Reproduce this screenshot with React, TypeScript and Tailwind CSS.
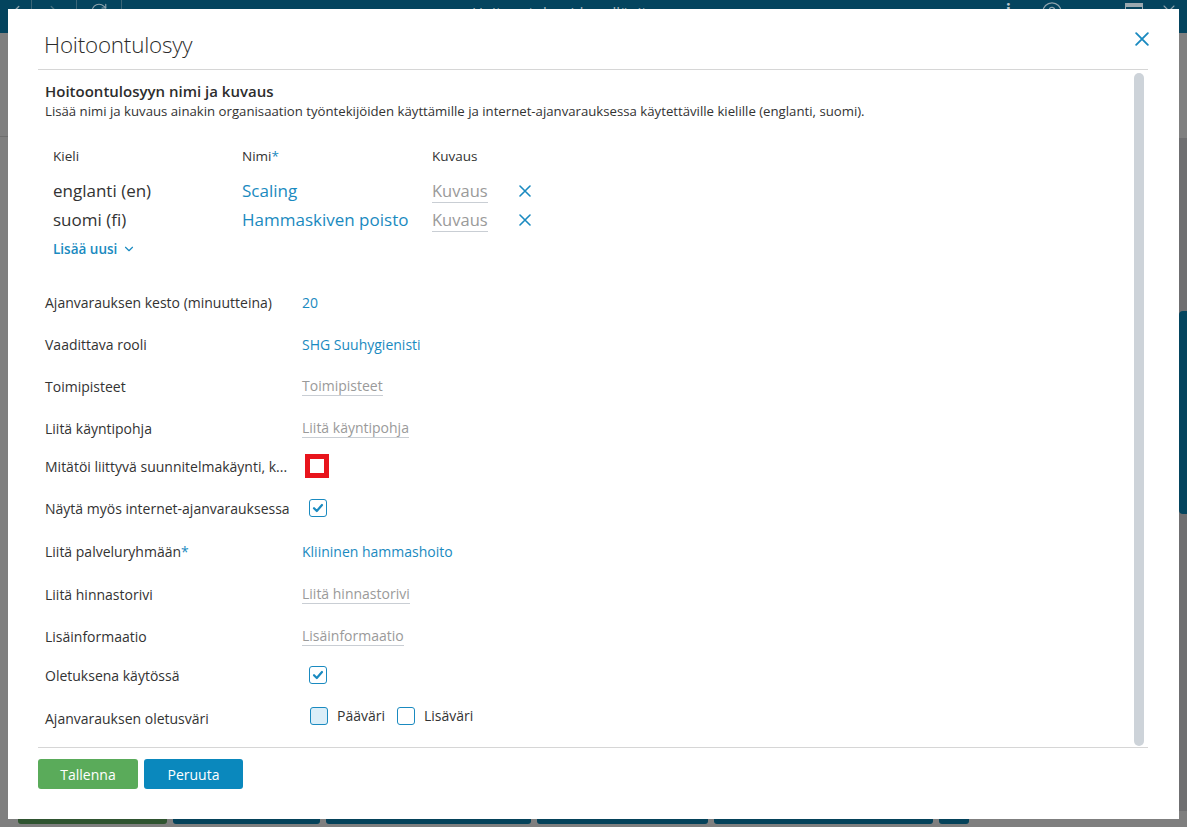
import { ChevronDown, ChevronLeft, ChevronRight, RotateCw, HelpCircle, X } from "lucide-react";

const font = { fontFamily: '"Open Sans", "Noto Sans", sans-serif' };

type Row = {
  label: string;
  required?: boolean;
  kind: "value" | "placeholder" | "checked" | "focused" | "colors";
  text?: string;
  spacing: string;
};

const rows: Row[] = [
  { label: "Ajanvarauksen kesto (minuutteina)", kind: "value", text: "20", spacing: "mt-0" },
  { label: "Vaadittava rooli", kind: "value", text: "SHG Suuhygienisti", spacing: "mt-[18px]" },
  { label: "Toimipisteet", kind: "placeholder", text: "Toimipisteet", spacing: "mt-[18px]" },
  { label: "Liitä käyntipohja", kind: "placeholder", text: "Liitä käyntipohja", spacing: "mt-[18px]" },
  { label: "Mitätöi liittyvä suunnitelmakäynti, k...", kind: "focused", spacing: "mt-[14px]" },
  { label: "Näytä myös internet-ajanvarauksessa", kind: "checked", spacing: "mt-[18px]" },
  { label: "Liitä palveluryhmään", required: true, kind: "value", text: "Kliininen hammashoito", spacing: "mt-[19px]" },
  { label: "Liitä hinnastorivi", kind: "placeholder", text: "Liitä hinnastorivi", spacing: "mt-[19px]" },
  { label: "Lisäinformaatio", kind: "placeholder", text: "Lisäinformaatio", spacing: "mt-[18px]" },
  { label: "Oletuksena käytössä", kind: "checked", spacing: "mt-[15px]" },
  { label: "Ajanvarauksen oletusväri", kind: "colors", spacing: "mt-[19px]" },
];

const Check = () => (
  <span className="flex h-[18px] w-[18px] items-center justify-center rounded-[3px] border-[1.5px] border-[#1a8ac0] bg-white">
    <svg viewBox="0 0 12 12" className="h-[12px] w-[12px]">
      <path d="M2 6.2 L4.8 9 L10 3" fill="none" stroke="#1a8ac0" strokeWidth="2.2" strokeLinecap="round" strokeLinejoin="round" />
    </svg>
  </span>
);

const Placeholder = ({ text }: { text: string }) => (
  <span className="border-b border-[#c9ced4] leading-[19px] text-[#9a9a9a]">{text}</span>
);

const Cross = ({ size }: { size: string }) => (
  <svg viewBox="0 0 12 12" className={size}>
    <path d="M1 1 L11 11 M11 1 L1 11" stroke="#1a8ac0" strokeWidth="1.6" strokeLinecap="round" />
  </svg>
);

function FieldValue({ row }: { row: Row }) {
  switch (row.kind) {
    case "value":
      return <span className="text-[#1a8ac0]">{row.text}</span>;
    case "placeholder":
      return <Placeholder text={row.text ?? ""} />;
    case "checked":
      return (
        <span className="ml-[7px]">
          <Check />
        </span>
      );
    case "focused":
      return (
        <span className="ml-[3px] flex h-[24px] w-[24px] items-center justify-center border-[5px] border-[#e8141c] bg-white" />
      );
    case "colors":
      return (
        <span className="ml-[8px] -mt-[5px] flex items-center">
          <span className="h-[18px] w-[18px] rounded-[3px] border-[1.5px] border-[#1a8ac0] bg-[#dbeef8]" />
          <span className="ml-[9px]">Pääväri</span>
          <span className="ml-[12px] h-[18px] w-[18px] rounded-[3px] border-[1.5px] border-[#1a8ac0] bg-white" />
          <span className="ml-[9px]">Lisäväri</span>
        </span>
      );
  }
}

function AppBackdrop() {
  return (
    <div className="flex h-full flex-col">
      <div className="relative flex h-[33px] items-start bg-[#04445e] text-[#8fa3ad]">
        <div className="flex h-[33px] w-[32px] items-start justify-center border-r border-[#3b6678] pt-[1px]">
          <ChevronLeft size={22} strokeWidth={1.5} />
        </div>
        <div className="flex h-[33px] w-[45px] items-start justify-center border-r border-[#3b6678] pt-[1px] text-[#46707f]">
          <ChevronRight size={22} strokeWidth={1.5} />
        </div>
        <div className="flex h-[33px] w-[45px] items-start justify-center border-r border-[#3b6678] pt-[2px]">
          <RotateCw size={18} strokeWidth={1.5} />
        </div>
        <div className="flex-1 pt-[1px] text-center text-[15px] text-[#aab8bf]">Hoitoontulosyiden ylläpito</div>
        <div className="flex items-start pr-[8px] pt-[1px]">
          <span className="text-[17px] font-bold leading-[20px] text-[#b9c5cb]">i</span>
          <span className="ml-[30px]">
            <HelpCircle size={22} strokeWidth={1.3} />
          </span>
          <span className="mt-[2px] ml-[62px] h-[16px] w-[18px] border-t-[4px] border-x border-b border-[#9aa9b0]" />
          <span className="ml-[16px]">
            <X size={20} strokeWidth={1.3} />
          </span>
        </div>
      </div>
      <div className="flex flex-1">
        <div className="flex-1 bg-[#7f7f7f]">
          <div className="h-[104px] border-b border-[#6e6e6e]" />
        </div>
        <div className="flex w-[8px] flex-col">
          <div className="h-[105px] bg-[#808080]" />
          <div className="flex flex-1 flex-col bg-[#6f6f71] pt-[173px]">
            <div className="h-[203px] rounded-l-[4px] bg-[#04455e]" />
          </div>
        </div>
      </div>
      <div className="flex h-[16px] items-end gap-[6px] bg-[#7f7f7f] pb-[3px] pl-[18px]">
        <div className="h-[10px] w-[149px] rounded-b-[3px] bg-[#2f5430]" />
        <div className="h-[10px] w-[147px] rounded-b-[3px] bg-[#04425a]" />
        <div className="h-[10px] w-[205px] rounded-b-[3px] bg-[#04425a]" />
        <div className="h-[10px] w-[171px] rounded-b-[3px] bg-[#04425a]" />
        <div className="h-[10px] w-[219px] rounded-b-[3px] bg-[#04425a]" />
        <div className="h-[10px] w-[30px] rounded-b-[3px] bg-[#04425a]" />
      </div>
    </div>
  );
}

export default function App() {
  return (
    <div className="relative h-[827px] w-[1187px] overflow-hidden bg-[#7f7f7f]" style={font}>
      <AppBackdrop />

      <div className="absolute left-[8px] top-[9px] flex h-[810px] w-[1171px] flex-col bg-white text-[#333]">
        <div className="flex h-[60px] items-center justify-between pl-[36px] pr-[30px]">
          <h1 className="pt-[11px] text-[22.4px] font-light tracking-[-0.2px] text-[#2b2b2b]">Hoitoontulosyy</h1>
          <Cross size="h-[14px] w-[14px]" />
        </div>

        <div className="flex min-h-0 flex-1 border-t border-[#d6d6d6] ml-[30px] mr-[31px]">
          <div className="flex-1 pl-[7px] pt-[10px]">
            <h2 className="text-[15px] font-semibold leading-[22px] text-[#2d2d2d]">Hoitoontulosyyn nimi ja kuvaus</h2>
            <p className="text-[13.2px] leading-[18px] text-[#333]">
              Lisää nimi ja kuvaus ainakin organisaation työntekijöiden käyttämille ja internet-ajanvarauksessa käytettäville kielille (englanti, suomi).
            </p>

            <div className="mt-[26px] pl-[8px] text-[13.5px]">
              <div className="grid grid-cols-[189px_190px_87px_20px] leading-[20px]">
                <span>Kieli</span>
                <span>
                  Nimi<span className="text-[#1a8ac0]">*</span>
                </span>
                <span>Kuvaus</span>
                <span />
              </div>
              <div className="mt-[14px] grid grid-cols-[189px_190px_87px_20px] items-center gap-y-[7px] text-[17px] leading-[22px]">
                <span>englanti (en)</span>
                <span className="text-[#1a8ac0]">Scaling</span>
                <span className="justify-self-start text-[16.5px]">
                  <Placeholder text="Kuvaus" />
                </span>
                <Cross size="h-[12px] w-[12px]" />
                <span>suomi (fi)</span>
                <span className="text-[#1a8ac0]">Hammaskiven poisto</span>
                <span className="justify-self-start text-[16.5px]">
                  <Placeholder text="Kuvaus" />
                </span>
                <Cross size="h-[12px] w-[12px]" />
              </div>
              <button className="mt-[8px] flex items-center gap-[5px] text-[13.5px] font-semibold text-[#1a8ac0]">
                Lisää uusi
                <ChevronDown size={14} strokeWidth={2} />
              </button>
            </div>

            <div className="mt-[31px] text-[14px]">
              {rows.map((row) => (
                <div key={row.label} className={`flex h-[24px] items-center ${row.spacing}`}>
                  <span className="w-[257px] shrink-0">
                    {row.label}
                    {row.required && <span className="text-[#1a8ac0]">*</span>}
                  </span>
                  <FieldValue row={row} />
                </div>
              ))}
            </div>
          </div>
          <div className="mr-[4px] mt-[3px] mb-[1px] w-[10px] rounded-full bg-[#cdd3d9]" />
        </div>

        <div className="ml-[30px] mr-[31px] flex h-[72px] items-start gap-[6px] border-t border-[#d6d6d6] pt-[11px]">
          <button className="h-[30px] w-[100px] rounded-[3px] bg-[#5aab5a] text-[14px] text-white">Tallenna</button>
          <button className="h-[30px] w-[99px] rounded-[3px] bg-[#0a88bd] text-[14px] text-white">Peruuta</button>
        </div>
      </div>
    </div>
  );
}
